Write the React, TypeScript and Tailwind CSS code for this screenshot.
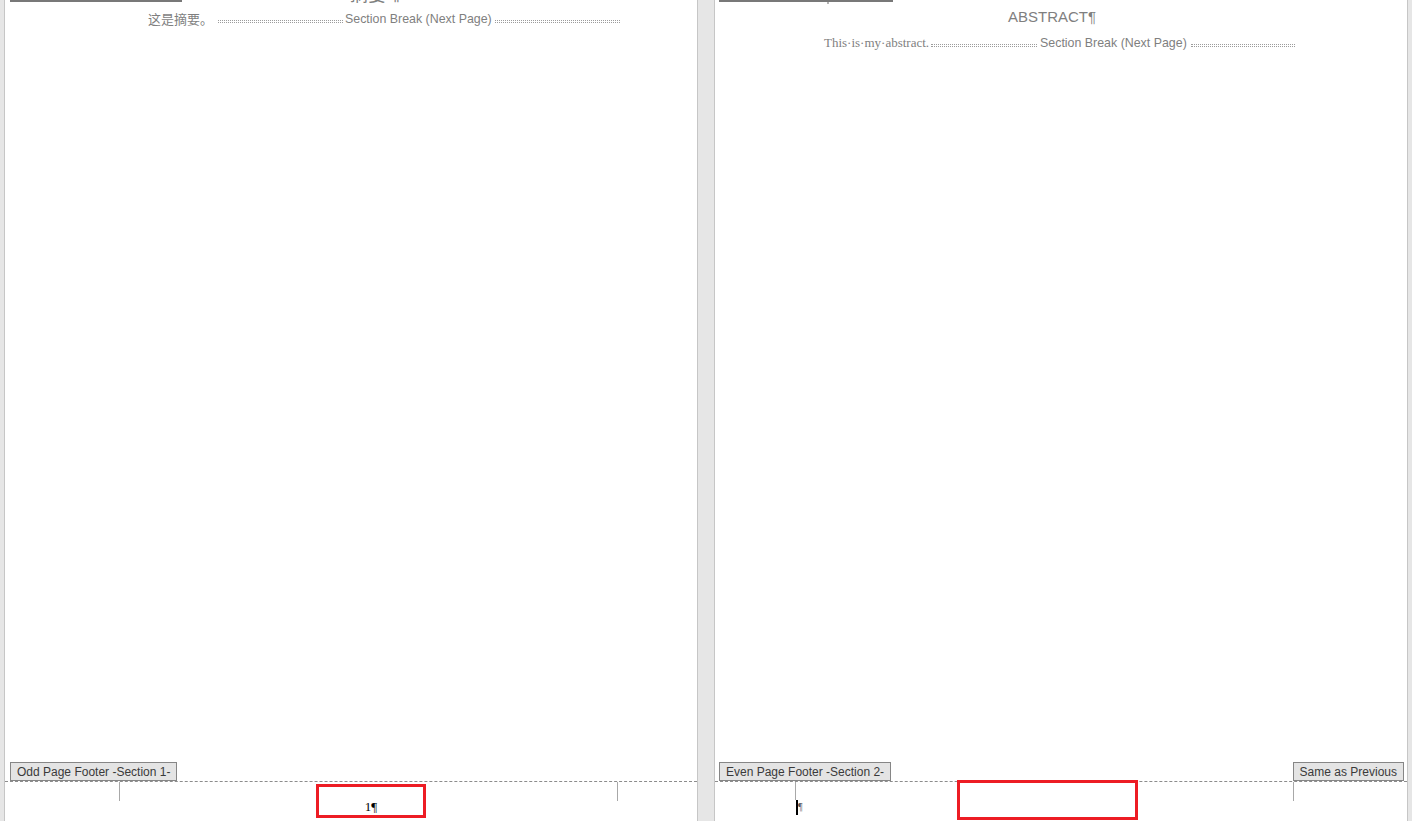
function Leader({ width }: { width: string }) {
  return <span className={`h-[3px] border-y border-dotted border-[#9c9c9c] ${width}`} />;
}

function FooterTag({ label }: { label: string }) {
  return (
    <span className="flex h-[19px] items-center border border-[#868686] bg-[#e4e4e4] px-[6px] text-[12px] leading-none text-[#3a3a3a]">
      {label}
    </span>
  );
}

function MarginMark() {
  return <span className="h-[19px] w-px shrink-0 bg-[#a8a8a8]" />;
}

export default function App() {
  return (
    <div className="flex h-[821px] w-[1412px] overflow-hidden bg-[#e6e6e6] pl-[4px] font-['Liberation_Sans',Arial,sans-serif]">
      {/* odd page, section 1 */}
      <section className="flex h-full w-[694px] shrink-0 flex-col border-x border-[#c6c6c6] bg-white">
        <div className="flex h-[4px] overflow-hidden">
          <div className="ml-[5px] h-[2px] w-[172px] shrink-0 bg-[#787878]" />
          <span className="-mt-[17px] ml-[168px] font-['Noto_Sans_CJK_SC',sans-serif] text-[18px] leading-[20px] text-[#7f7f7f]">
            摘要¶
          </span>
        </div>

        <div className="mt-[7px] flex items-center pl-[143px] text-[#7f7f7f]">
          <span className="font-['Noto_Sans_CJK_SC',sans-serif] text-[13px] leading-[16px]">这是摘要。</span>
          <span className="ml-[5px] mt-[5px] flex">
            <Leader width="w-[125px]" />
          </span>
          <span className="ml-[2px] text-[12.4px] leading-[16px]">Section Break (Next Page)</span>
          <span className="ml-[3px] mt-[5px] flex">
            <Leader width="w-[125px]" />
          </span>
        </div>

        <div className="mt-auto">
          <div className="flex h-[19px] items-end pl-[5px]">
            <FooterTag label="Odd Page Footer -Section 1-" />
          </div>
          <div className="flex h-[40px] items-start border-t border-dashed border-[#8c8c8c]">
            <span className="ml-[114px] flex">
              <MarginMark />
            </span>
            <div className="ml-[196px] mt-[2px] flex h-[34px] w-[110px] shrink-0 items-end justify-center border-[3px] border-[#ed1c24] pb-[1px]">
              <span className="font-['Liberation_Serif',serif] text-[13px] leading-[15px] text-black">1¶</span>
            </div>
            <span className="ml-[191px] flex">
              <MarginMark />
            </span>
          </div>
        </div>
      </section>

      <div className="w-[16px] shrink-0" />

      {/* even page, section 2 */}
      <section className="flex h-full w-[694px] shrink-0 flex-col border-x border-[#c6c6c6] bg-white">
        <div className="flex h-[4px] overflow-hidden">
          <div className="ml-[4px] h-[2px] w-[174px] shrink-0 bg-[#787878]">
            <div className="ml-[108px] mt-[2px] h-[3px] w-[2px] bg-[#b4b4b4]" />
          </div>
        </div>

        <div className="mt-[3px] pl-[293px] text-[15px] leading-[20px] text-[#7f7f7f]">ABSTRACT¶</div>

        <div className="mt-[8px] flex items-center pl-[109px] text-[#7f7f7f]">
          <span className="font-['Liberation_Serif',serif] text-[13px] leading-[16px]">This·is·my·abstract.</span>
          <span className="ml-[2px] mt-[5px] flex">
            <Leader width="w-[106px]" />
          </span>
          <span className="ml-[3px] text-[12.4px] leading-[16px]">Section Break (Next Page)</span>
          <span className="ml-[4px] mt-[5px] flex">
            <Leader width="w-[104px]" />
          </span>
        </div>

        <div className="mt-auto">
          <div className="flex h-[19px] items-end justify-between pl-[4px] pr-[3px]">
            <FooterTag label="Even Page Footer -Section 2-" />
            <FooterTag label="Same as Previous" />
          </div>
          <div className="flex h-[40px] items-start border-t border-dashed border-[#8c8c8c]">
            <div className="ml-[80px] flex w-[12px] shrink-0 flex-col">
              <span className="h-[18px] w-px bg-[#a8a8a8]" />
              <div className="flex items-start">
                <span className="ml-[1px] h-[15px] w-[2px] bg-black" />
                <span className="mt-[1px] font-['Liberation_Serif',serif] text-[10px] leading-[12px] text-[#555]">¶</span>
              </div>
            </div>
            <div className="-mt-[2px] ml-[150px] h-[40px] w-[181px] shrink-0 border-[3px] border-[#ed1c24]" />
            <span className="ml-[155px] flex">
              <MarginMark />
            </span>
          </div>
        </div>
      </section>
    </div>
  );
}
